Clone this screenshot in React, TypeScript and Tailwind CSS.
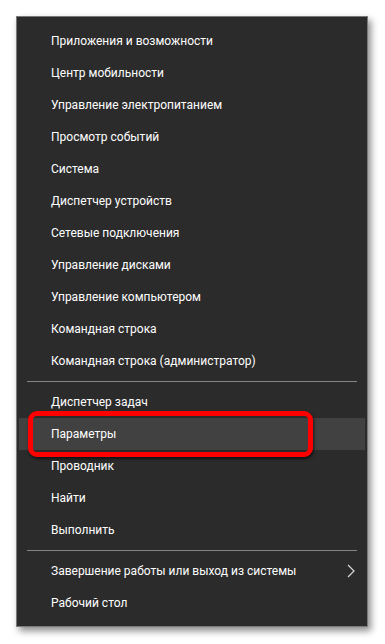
const groups = [
  [
    'Приложения и возможности',
    'Центр мобильности',
    'Управление электропитанием',
    'Просмотр событий',
    'Система',
    'Диспетчер устройств',
    'Сетевые подключения',
    'Управление дисками',
    'Управление компьютером',
    'Командная строка',
    'Командная строка (администратор)',
  ],
  ['Диспетчер задач', 'Параметры', 'Проводник', 'Найти', 'Выполнить'],
  ['Завершение работы или выход из системы', 'Рабочий стол'],
]

function Row({ label }: { label: string }) {
  const active = label === 'Параметры'
  const submenu = label.startsWith('Завершение')
  return (
    <div className={`relative flex h-[32px] items-center pl-[32px] pr-[10px] ${active ? 'bg-[#414141]' : ''}`}>
      <span className="text-[12px] text-white">{label}</span>
      {submenu && (
        <svg className="ml-auto" width="8" height="14" viewBox="0 0 8 14">
          <polyline points="1,1 7,7 1,13" fill="none" stroke="#d8d8d8" strokeWidth="1.2" />
        </svg>
      )}
      {active && (
        <div className="absolute -top-[7px] left-[9px] h-[46px] w-[285px] rounded-[9px] border-[5px] border-[#ff0000] shadow-[1px_2px_3px_rgba(0,0,0,0.6)]" />
      )}
    </div>
  )
}

export default function App() {
  return (
    <div className="h-[644px] w-[385px] bg-white pl-[16px] pt-[16px]" style={{ fontFamily: 'Roboto, "Noto Sans", sans-serif' }}>
      <div className="w-[352px] border border-[#7a7a7a] bg-[#2b2b2b] px-[2px] pb-[7px] pt-[8px] shadow-[3px_4px_7px_rgba(0,0,0,0.45)]">
        {groups.map((items, gi) => (
          <div key={gi}>
            {gi > 0 && <div className="mx-[8px] my-[4px] h-px bg-[#858585]" />}
            {items.map((label) => (
              <Row key={label} label={label} />
            ))}
          </div>
        ))}
      </div>
    </div>
  )
}
